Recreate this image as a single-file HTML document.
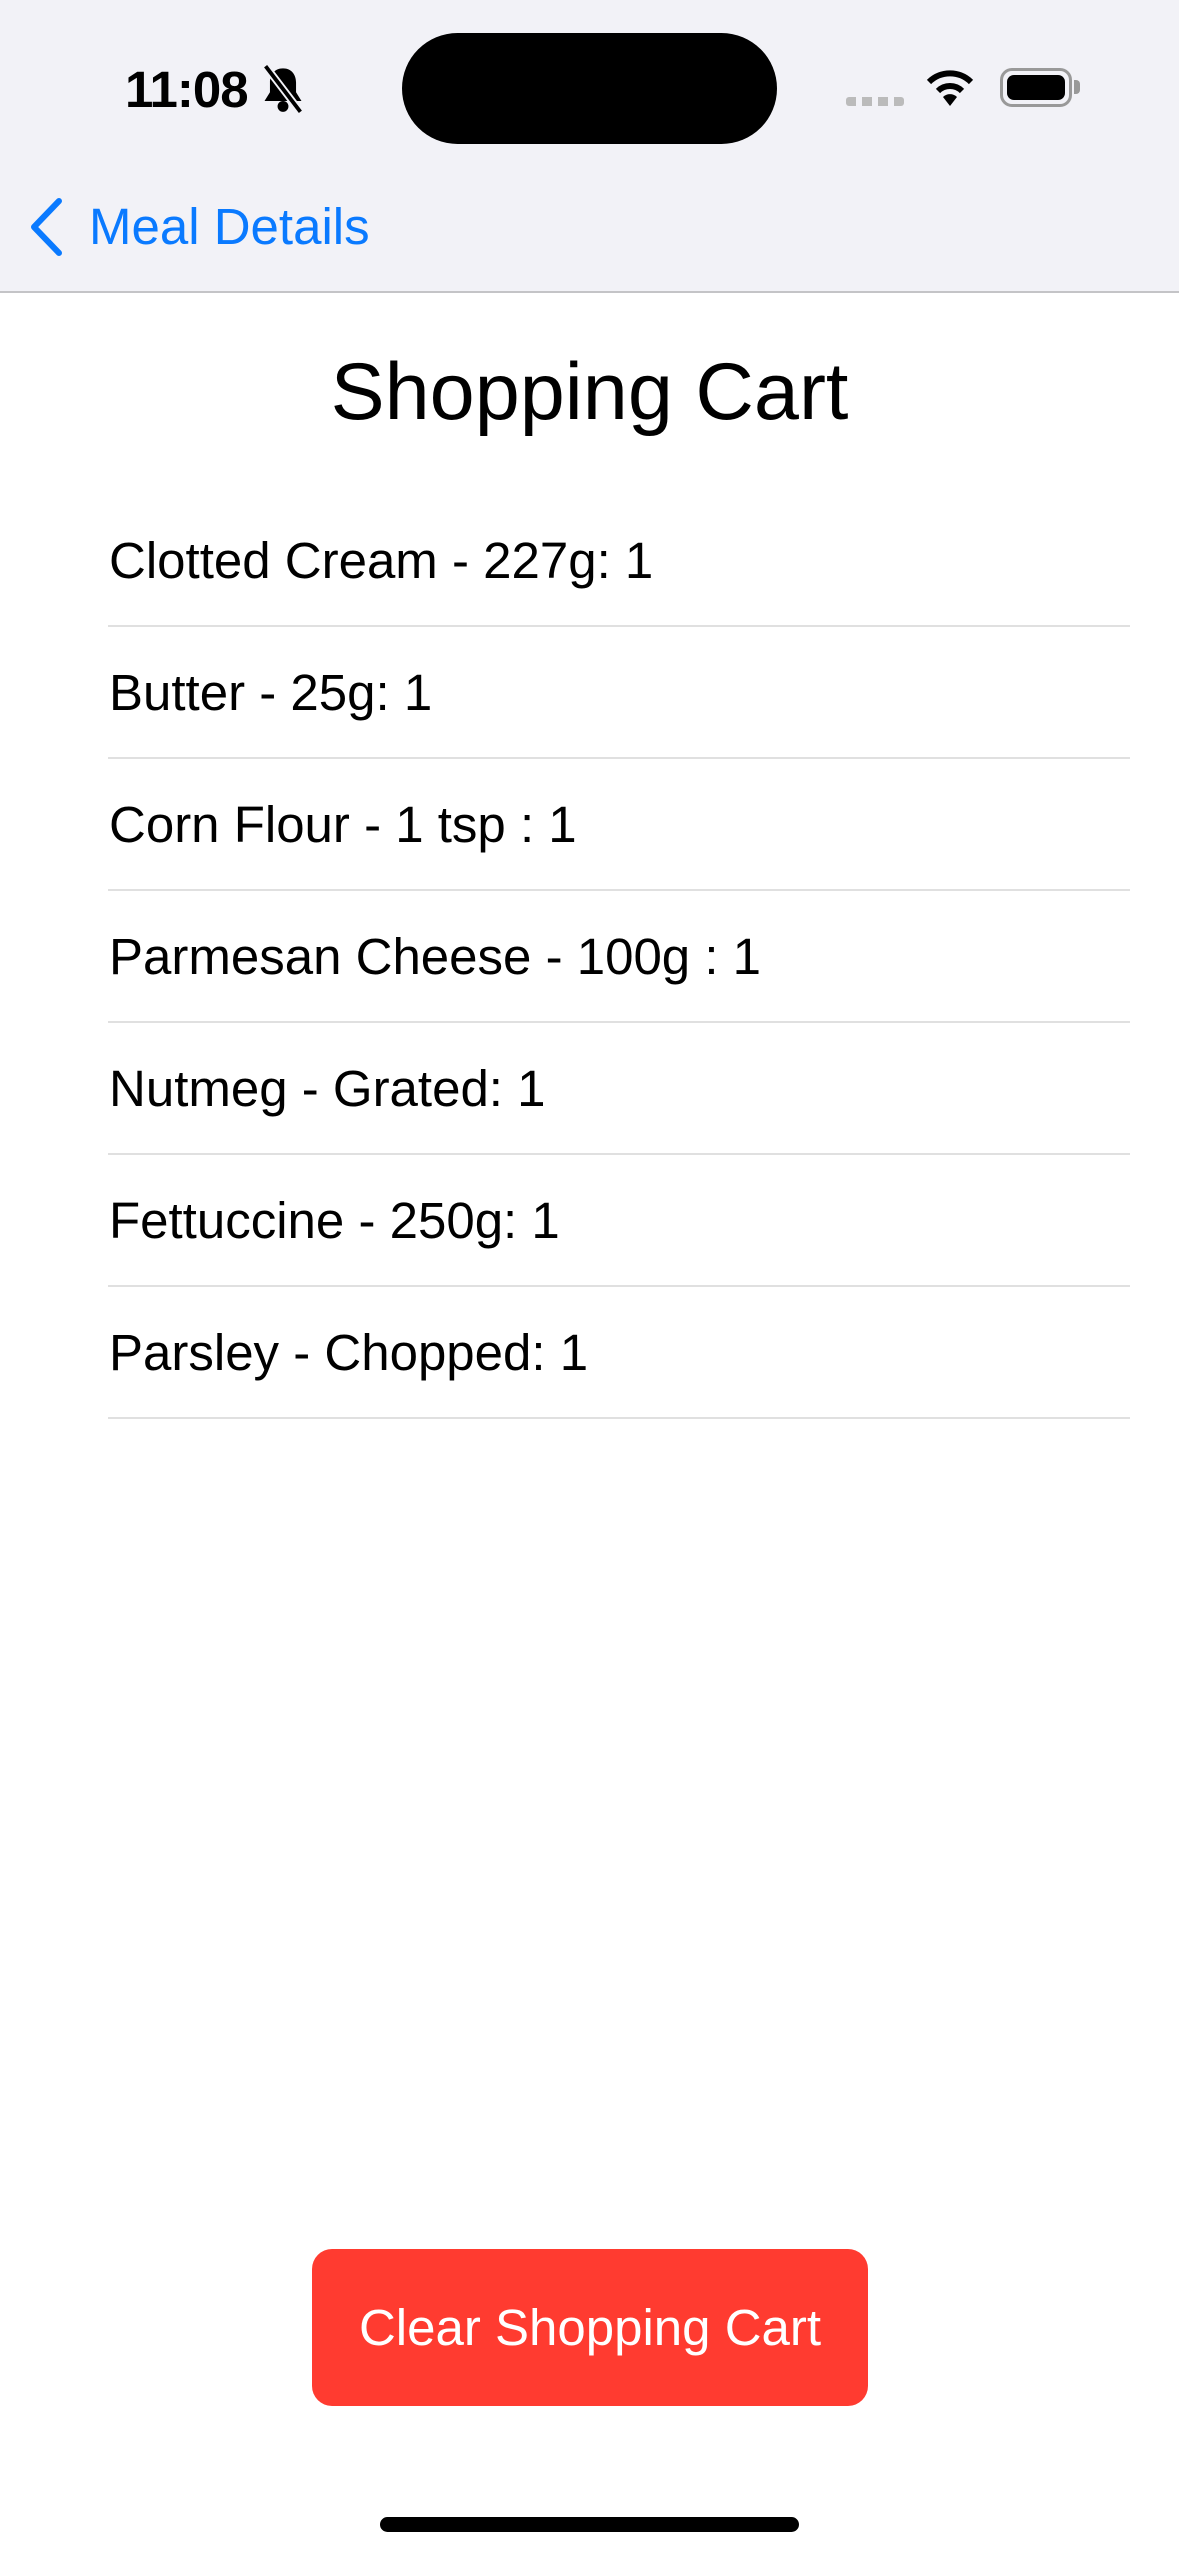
<!DOCTYPE html>
<html><head><meta charset="utf-8"><style>
*{margin:0;padding:0;box-sizing:border-box}
body{width:1179px;height:2556px;background:#fff;font-family:"Liberation Sans",sans-serif;position:relative;overflow:hidden}
.nav{position:absolute;left:0;top:0;width:1179px;height:293px;background:#f2f2f7;border-bottom:2px solid #c4c4c7}
.abs{position:absolute}
.row{position:absolute;left:109px;font-size:51px;color:#000;line-height:1}
.sep{position:absolute;left:108px;width:1022px;height:2px;background:#e0e0e0}
</style></head><body>
<div class="nav"></div>
<div class="abs" style="left:125px;top:60px;font-size:51px;font-weight:bold;letter-spacing:-1px">11:08</div>
<svg class="abs" style="left:260px;top:64px" width="46" height="50" viewBox="0 0 42 46"><path d="M21 4c-8 0-12 6-12 13v9l-5 8h34l-5-8v-9c0-7-4-13-12-13z" fill="#000"/><circle cx="21" cy="39" r="5" fill="#000"/><path d="M5 2l32 42" stroke="#f2f2f7" stroke-width="7"/><path d="M5 2l32 42" stroke="#000" stroke-width="3.5"/></svg>
<div class="abs" style="left:402px;top:33px;width:375px;height:111px;background:#000;border-radius:56px"></div>
<div class="abs" style="left:846px;top:97px;width:58px;height:9px;background:repeating-linear-gradient(90deg,#bbb 0 10px,transparent 10px 16px);border-radius:3px"></div>
<svg class="abs" style="left:922px;top:66px" width="56" height="42" viewBox="0 0 56 42"><path d="M28 40l-7-9a10 10 0 0 1 14 0z" fill="#000"/><path d="M16 25a17 17 0 0 1 24 0" stroke="#000" stroke-width="6" fill="none"/><path d="M7 16a30 30 0 0 1 42 0" stroke="#000" stroke-width="6" fill="none"/></svg>
<div class="abs" style="left:1000px;top:68px;width:72px;height:39px;border:3px solid #999;border-radius:12px;padding:4px"><div style="width:100%;height:100%;background:#000;border-radius:7px"></div></div>
<div class="abs" style="left:1074px;top:80px;width:6px;height:14px;background:#999;border-radius:0 4px 4px 0"></div>
<svg class="abs" style="left:26px;top:197px" width="40" height="60" viewBox="0 0 40 60"><path d="M33 4L8 30l25 26" stroke="#0a7aff" stroke-width="6" fill="none" stroke-linecap="round" stroke-linejoin="round"/></svg>
<div class="abs" style="left:89px;top:197px;font-size:51px;color:#0a7aff">Meal Details</div>
<div class="abs" style="left:0;width:1179px;top:346px;text-align:center;font-size:81px">Shopping Cart</div>
<div class="row" style="top:535px">Clotted Cream - 227g: 1</div>
<div class="sep" style="top:625px"></div>
<div class="row" style="top:667px">Butter - 25g: 1</div>
<div class="sep" style="top:757px"></div>
<div class="row" style="top:799px">Corn Flour - 1 tsp : 1</div>
<div class="sep" style="top:889px"></div>
<div class="row" style="top:931px">Parmesan Cheese - 100g : 1</div>
<div class="sep" style="top:1021px"></div>
<div class="row" style="top:1063px">Nutmeg - Grated: 1</div>
<div class="sep" style="top:1153px"></div>
<div class="row" style="top:1195px">Fettuccine - 250g: 1</div>
<div class="sep" style="top:1285px"></div>
<div class="row" style="top:1327px">Parsley - Chopped: 1</div>
<div class="sep" style="top:1417px"></div>
<div class="abs" style="left:312px;top:2249px;width:556px;height:157px;background:#ff3b30;border-radius:20px;color:#fff;font-size:51px;text-align:center;line-height:157px">Clear Shopping Cart</div>
<div class="abs" style="left:380px;top:2517px;width:419px;height:15px;background:#000;border-radius:8px"></div>
</body></html>
